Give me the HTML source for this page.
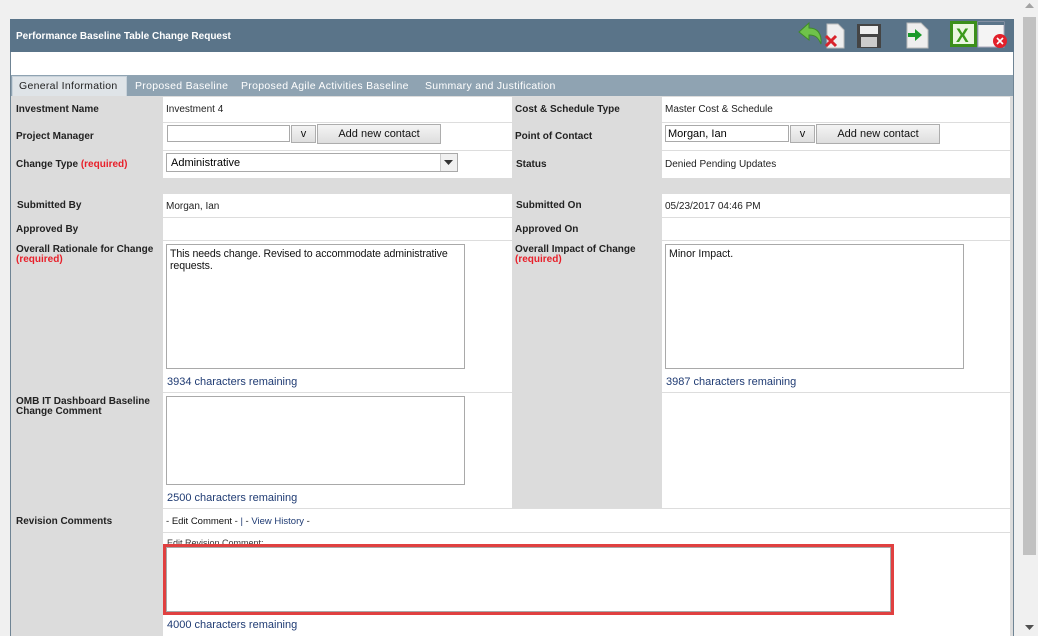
<!DOCTYPE html>
<html><head><meta charset="utf-8"><style>
*{margin:0;padding:0;box-sizing:border-box}
body{width:1038px;height:636px;overflow:hidden;background:#f0f0f0;font-family:"Liberation Sans",Arial,sans-serif;position:relative}
.a{position:absolute}
.lbl{position:absolute;font-size:10px;font-weight:bold;color:#222;line-height:10px}
.val{position:absolute;background:#fff}
.t{position:absolute;font-size:10px;color:#222}
.req{color:#e8202a}
.ta{position:absolute;border:1px solid #a9a9a9;background:#fff;font-size:10.6px;padding:3px 3px;color:#111;line-height:12px}
.rem{position:absolute;font-size:11px;color:#1f3b73}
.in{position:absolute;border:1px solid #a9a9a9;background:#fff;font-size:11px;padding:1px 2px;height:17px}
.btn{position:absolute;border:1px solid #adadad;background:linear-gradient(#f4f4f4,#dedede);font-size:11px;text-align:center;line-height:18px;height:20px;color:#111}
.hl{position:absolute;height:1px;background:#ddd}
.tab{position:absolute;top:80px;font-size:10.5px;color:#fff;letter-spacing:0.3px}
</style></head><body>
<div class="a" style="left:10px;top:19px;width:1004px;height:617px;background:#dcdcdc;border-left:1px solid #6f8494;border-right:1px solid #6f8494"></div>
<div class="a" style="left:10px;top:19px;width:1004px;height:33px;background:#5a7489"></div>
<div class="t" style="left:16px;top:31px;color:#fff;font-weight:bold;font-size:10px">Performance Baseline Table Change Request</div>
<div class="a" style="left:11px;top:52px;width:1002px;height:23px;background:#fff"></div>
<div class="a" style="left:11px;top:75px;width:1002px;height:21px;background:#8fa3b2"></div>
<div class="a" style="left:12px;top:76px;width:115px;height:20px;background:#dfe4e8;border:1px solid #c8d2da;border-bottom:none"></div>
<div class="tab" style="left:19px;color:#222">General Information</div>
<div class="tab" style="left:135px">Proposed Baseline</div>
<div class="tab" style="left:241px">Proposed Agile Activities Baseline</div>
<div class="tab" style="left:425px">Summary and Justification</div>
<svg class="a" style="left:795px;top:20px" width="220" height="30">
<path d="M4 12 L14 3 L14 8 C22 8 27 13 26 24 C23 17 20 15 14 15 L14 20 Z" fill="#6fc24a" stroke="#3f8a2a" stroke-width="1"/>
<path d="M32 4 h11 l6 6 v18 h-17z" fill="#eee" stroke="#bbb"/>
<path d="M31 16 l10 10 M41 16 l-10 10" stroke="#d9232b" stroke-width="3"/>
<rect x="62" y="4" width="24" height="24" fill="#444"/><rect x="65" y="6" width="18" height="8" fill="#eee"/><rect x="66" y="17" width="16" height="10" fill="#ccc"/>
<path d="M112 3 h14 l7 7 v18 h-21z" fill="#eee" stroke="#bbb"/>
<path d="M113 13 h7 v-4 l7 6 -7 6 v-4 h-7z" fill="#1a9a2a"/>
<rect x="155" y="1" width="27" height="26" fill="#3b8f1a"/><rect x="158" y="4" width="21" height="20" fill="#eaf6e0"/>
<text x="161" y="22" font-family="Liberation Sans" font-weight="bold" font-size="19" fill="#3b9a1a">X</text>
<rect x="183" y="2" width="26" height="25" fill="#f4f4f4" stroke="#aab"/><rect x="183" y="2" width="26" height="3" fill="#5a7489"/>
<circle cx="205" cy="21" r="7" fill="#e2202a"/><path d="M202 18 l6 6 M208 18 l-6 6" stroke="#fff" stroke-width="1.6"/>
</svg>
<div class="val" style="left:163px;top:97px;width:349px;height:81px"></div>
<div class="val" style="left:662px;top:97px;width:348px;height:81px"></div>
<div class="val" style="left:163px;top:194px;width:349px;height:314px"></div>
<div class="val" style="left:662px;top:194px;width:348px;height:314px"></div>
<div class="val" style="left:163px;top:509px;width:847px;height:127px"></div>
<div class="hl" style="left:163px;top:122px;width:349px"></div><div class="hl" style="left:662px;top:122px;width:348px"></div>
<div class="hl" style="left:163px;top:150px;width:349px"></div><div class="hl" style="left:662px;top:150px;width:348px"></div>
<div class="hl" style="left:163px;top:217px;width:349px"></div><div class="hl" style="left:662px;top:217px;width:348px"></div>
<div class="hl" style="left:163px;top:240px;width:349px"></div><div class="hl" style="left:662px;top:240px;width:348px"></div>
<div class="hl" style="left:163px;top:392px;width:349px"></div><div class="hl" style="left:662px;top:392px;width:348px"></div>
<div class="hl" style="left:163px;top:508px;width:847px"></div>
<div class="hl" style="left:163px;top:532px;width:847px"></div>
<div class="lbl" style="left:16px;top:105px">Investment Name</div>
<div class="lbl" style="left:16px;top:132px">Project Manager</div>
<div class="lbl" style="left:16px;top:160px">Change Type <span class="req">(required)</span></div>
<div class="lbl" style="left:17px;top:201px">Submitted By</div>
<div class="lbl" style="left:16px;top:225px">Approved By</div>
<div class="lbl" style="left:16px;top:245px">Overall Rationale for Change<br><span class="req">(required)</span></div>
<div class="lbl" style="left:16px;top:397px">OMB IT Dashboard Baseline<br>Change Comment</div>
<div class="lbl" style="left:16px;top:517px">Revision Comments</div>
<div class="lbl" style="left:515px;top:105px">Cost &amp; Schedule Type</div>
<div class="lbl" style="left:515px;top:132px">Point of Contact</div>
<div class="lbl" style="left:516px;top:160px">Status</div>
<div class="lbl" style="left:516px;top:201px">Submitted On</div>
<div class="lbl" style="left:515px;top:225px">Approved On</div>
<div class="lbl" style="left:515px;top:245px">Overall Impact of Change<br><span class="req">(required)</span></div>
<div class="t" style="left:166px;top:104px">Investment 4</div>
<div class="in" style="left:167px;top:125px;width:123px"></div>
<div class="btn" style="left:291px;top:125px;width:25px;height:18px;line-height:16px">v</div>
<div class="btn" style="left:317px;top:124px;width:124px;line-height:19px">Add new contact</div>
<div class="in" style="left:166px;top:153px;width:292px;height:19px;font-size:11px;padding:3px 4px">Administrative</div>
<div class="a" style="left:440px;top:154px;width:17px;height:17px;border-left:1px solid #ccc;background:#f0f0f0"></div>
<svg class="a" style="left:444px;top:160px" width="9" height="5"><path d="M0 0h9L4.5 5z" fill="#333"/></svg>
<div class="t" style="left:665px;top:104px">Master Cost &amp; Schedule</div>
<div class="in" style="left:665px;top:125px;width:124px;font-size:11px;padding-top:2px">Morgan, Ian</div>
<div class="btn" style="left:790px;top:125px;width:25px;height:18px;line-height:16px">v</div>
<div class="btn" style="left:816px;top:124px;width:124px;line-height:19px">Add new contact</div>
<div class="t" style="left:665px;top:159px">Denied Pending Updates</div>
<div class="t" style="left:166px;top:201px">Morgan, Ian</div>
<div class="t" style="left:665px;top:201px">05/23/2017 04:46 PM</div>
<div class="ta" style="left:166px;top:244px;width:299px;height:125px;letter-spacing:-0.1px">This needs change. Revised to accommodate administrative requests.</div>
<div class="rem" style="left:167px;top:376px">3934 characters remaining</div>
<div class="ta" style="left:665px;top:244px;width:299px;height:125px">Minor Impact.</div>
<div class="rem" style="left:666px;top:376px">3987 characters remaining</div>
<div class="ta" style="left:166px;top:396px;width:299px;height:89px"></div>
<div class="rem" style="left:167px;top:492px">2500 characters remaining</div>
<div class="t" style="left:166px;top:516px;font-size:9.5px">- <span style="color:#111">Edit Comment</span> - <span style="color:#1f3b73">|</span> - <span style="color:#1f3b73">View History</span> -</div>
<div class="t" style="left:167px;top:538px;font-size:9px;color:#333">Edit Revision Comment:</div>
<div class="a" style="left:163px;top:544px;width:731px;height:71px;border:3px solid #e04040;background:#fff"></div>
<div class="a" style="left:166px;top:547px;width:725px;height:65px;border:1px solid #a9a9a9"></div>
<div class="rem" style="left:167px;top:619px">4000 characters remaining</div>
<div class="a" style="left:1019px;top:0;width:19px;height:636px;background:#f0f0f0"></div>
<div class="a" style="left:1023px;top:17px;width:13px;height:538px;background:#c1c1c1"></div>
<svg class="a" style="left:1025px;top:3px" width="9" height="6"><path d="M0 5h9L4.5 0z" fill="#a3a3a3"/></svg>
<svg class="a" style="left:1025px;top:625px" width="9" height="6"><path d="M0 0h9L4.5 5z" fill="#505050"/></svg>
</body></html>
